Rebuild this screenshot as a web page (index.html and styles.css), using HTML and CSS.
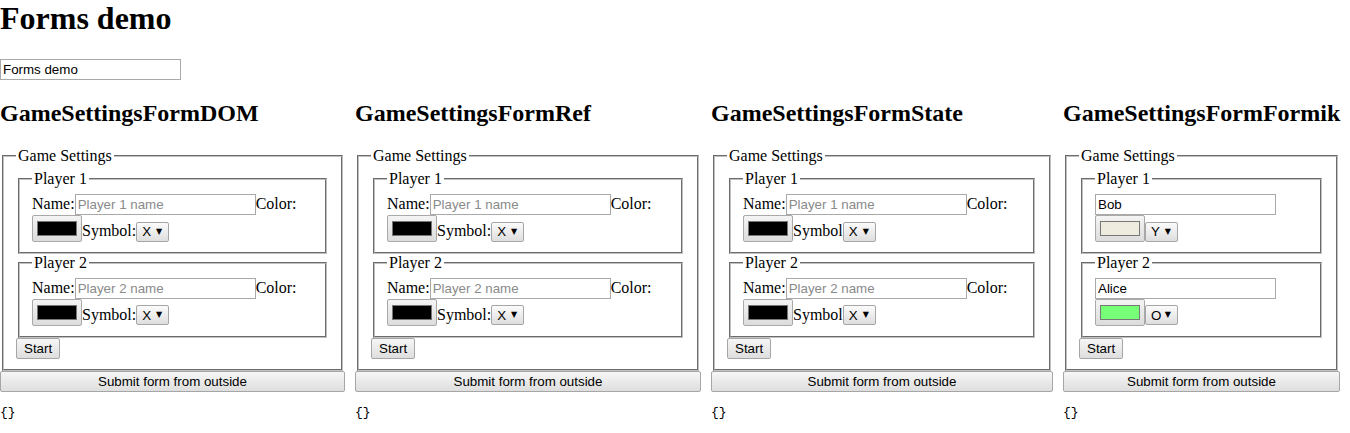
FILE: index.html
```html
<!DOCTYPE html>
<html>
<head>
<meta charset="utf-8">
<title>Forms demo</title>
<link rel="stylesheet" href="styles.css">
</head>
<body>
<h1 class="title">Forms demo</h1>
<input class="text-input" type="text" value="Forms demo">
<div class="row">
  <div class="col col-dom">
    <h2 class="col-title">GameSettingsFormDOM</h2>
    <form class="game-form">
      <fieldset class="outer">
        <legend>Game Settings</legend>
        <fieldset class="player">
          <legend>Player 1</legend>
          <label>Name:</label><input class="text-input" type="text" placeholder="Player 1 name"><label>Color:</label><input class="color-input" type="color" value="#000000"><label>Symbol:</label><span class="select-wrap"><select class="symbol"><option>X</option><option>O</option><option>Y</option></select></span>
        </fieldset>
        <fieldset class="player">
          <legend>Player 2</legend>
          <label>Name:</label><input class="text-input" type="text" placeholder="Player 2 name"><label>Color:</label><input class="color-input" type="color" value="#000000"><label>Symbol:</label><span class="select-wrap"><select class="symbol"><option>X</option><option>O</option><option>Y</option></select></span>
        </fieldset>
        <button class="btn" type="button">Start</button>
      </fieldset>
    </form>
    <button class="btn outside" type="button">Submit form from outside</button>
    <pre class="result">{}</pre>
  </div>
  <div class="col col-ref">
    <h2 class="col-title">GameSettingsFormRef</h2>
    <form class="game-form">
      <fieldset class="outer">
        <legend>Game Settings</legend>
        <fieldset class="player">
          <legend>Player 1</legend>
          <label>Name:</label><input class="text-input" type="text" placeholder="Player 1 name"><label>Color:</label><input class="color-input" type="color" value="#000000"><label>Symbol:</label><span class="select-wrap"><select class="symbol"><option>X</option><option>O</option><option>Y</option></select></span>
        </fieldset>
        <fieldset class="player">
          <legend>Player 2</legend>
          <label>Name:</label><input class="text-input" type="text" placeholder="Player 2 name"><label>Color:</label><input class="color-input" type="color" value="#000000"><label>Symbol:</label><span class="select-wrap"><select class="symbol"><option>X</option><option>O</option><option>Y</option></select></span>
        </fieldset>
        <button class="btn" type="button">Start</button>
      </fieldset>
    </form>
    <button class="btn outside" type="button">Submit form from outside</button>
    <pre class="result">{}</pre>
  </div>
  <div class="col col-state">
    <h2 class="col-title">GameSettingsFormState</h2>
    <form class="game-form">
      <fieldset class="outer">
        <legend>Game Settings</legend>
        <fieldset class="player">
          <legend>Player 1</legend>
          <label>Name:</label><input class="text-input" type="text" placeholder="Player 1 name"><label>Color:</label><input class="color-input" type="color" value="#000000"><label>Symbol</label><span class="select-wrap"><select class="symbol"><option>X</option><option>O</option><option>Y</option></select></span>
        </fieldset>
        <fieldset class="player">
          <legend>Player 2</legend>
          <label>Name:</label><input class="text-input" type="text" placeholder="Player 2 name"><label>Color:</label><input class="color-input" type="color" value="#000000"><label>Symbol</label><span class="select-wrap"><select class="symbol"><option>X</option><option>O</option><option>Y</option></select></span>
        </fieldset>
        <button class="btn" type="button">Start</button>
      </fieldset>
    </form>
    <button class="btn outside" type="button">Submit form from outside</button>
    <pre class="result">{}</pre>
  </div>
  <div class="col col-formik">
    <h2 class="col-title">GameSettingsFormFormik</h2>
    <form class="game-form">
      <fieldset class="outer">
        <legend>Game Settings</legend>
        <fieldset class="player">
          <legend>Player 1</legend>
          <input class="text-input" type="text" value="Bob"><input class="color-input" type="color" value="#eeecdf"><span class="select-wrap"><select class="symbol"><option>Y</option><option>X</option><option>O</option></select></span>
        </fieldset>
        <fieldset class="player">
          <legend>Player 2</legend>
          <input class="text-input" type="text" value="Alice"><input class="color-input" type="color" value="#77ff77"><span class="select-wrap"><select class="symbol"><option>O</option><option>X</option><option>Y</option></select></span>
        </fieldset>
        <button class="btn" type="button">Start</button>
      </fieldset>
    </form>
    <button class="btn outside" type="button">Submit form from outside</button>
    <pre class="result">{}</pre>
  </div>
</div>
</body>
</html>
```

FILE: styles.css
```css
html, body {
  margin: 0;
  padding: 0;
  background: #fff;
  color: #000;
  font-family: "Liberation Serif", "Times New Roman", serif;
}

input, select, button {
  font-family: "Liberation Sans", Arial, sans-serif;
  font-size: 13.333px;
  color: #000;
}

.title {
  margin: 0 0 22px 0;
  font-size: 2em;
  font-weight: bold;
}

.text-input {
  box-sizing: border-box;
  width: 181px;
  height: 21px;
  padding: 1px 2px;
  border: 1px solid #a9a9a9;
  border-radius: 0;
  background: #fff;
  margin: 0;
}

.text-input::placeholder {
  color: #8a8a8a;
}

.row {
  display: flex;
  align-items: flex-start;
}

.col {
  flex: none;
  margin-right: 10px;
}

.col-dom { width: 345px; }
.col-ref { width: 346px; }
.col-state { width: 342px; }
.col-formik { width: 277px; }

.col-title {
  font-size: 1.5em;
  margin: 0.83em 0;
  white-space: nowrap;
}

.game-form {
  margin: 0;
}

fieldset {
  margin: 0 2px;
  padding: 0.35em 0.75em 0.625em;
  border: 2px groove #c0c0c0;
}

legend {
  padding: 0 2px;
}

.color-input {
  box-sizing: border-box;
  width: 50px;
  height: 27px;
  margin: 0;
  padding: 1px 2px;
  border: 1px solid #a9a9a9;
  border-radius: 2px;
  background: linear-gradient(#f4f4f4, #dcdcdc);
}

.color-input::-webkit-color-swatch-wrapper {
  padding: 4px 2px;
}

.color-input::-webkit-color-swatch {
  border: 1px solid #777;
  border-radius: 0;
}

.select-wrap {
  position: relative;
  display: inline-block;
}

.select-wrap::after {
  content: "\25BC";
  position: absolute;
  right: 7px;
  top: 5px;
  font-family: "DejaVu Sans", sans-serif;
  font-size: 8px;
  line-height: 10px;
  color: #000;
  pointer-events: none;
}

.symbol {
  -webkit-appearance: none;
  appearance: none;
  box-sizing: border-box;
  height: 20px;
  margin: 0;
  padding: 0 15px 0 5px;
  border: 1px solid #a6a6a6;
  border-radius: 2px;
  background: linear-gradient(#fbfbfb, #dedede);
}

.btn {
  box-sizing: border-box;
  height: 21px;
  margin: 0;
  padding: 1px 7px;
  border: 1px solid #a6a6a6;
  border-radius: 2px;
  background: linear-gradient(#f6f6f6, #dedede);
}

.outside {
  display: block;
  width: 100%;
}

.result {
  font-family: "Liberation Mono", "DejaVu Sans Mono", monospace;
  font-size: 13px;
  margin: 13px 0;
}
```
